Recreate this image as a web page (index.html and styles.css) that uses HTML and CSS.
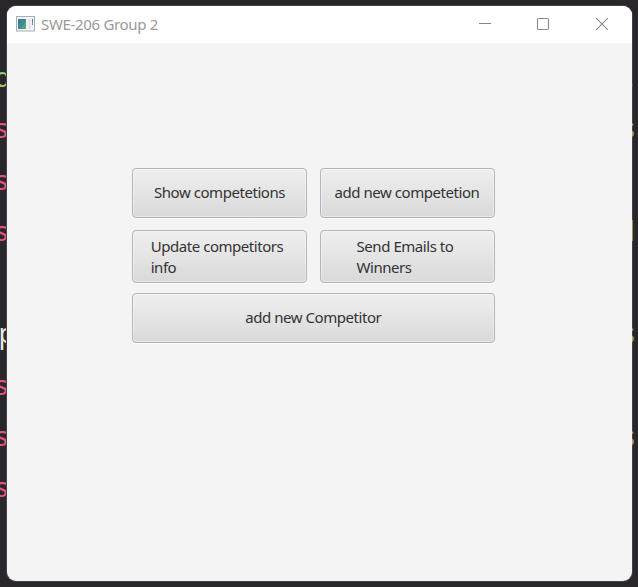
FILE: index.html
```html
<!DOCTYPE html>
<html lang="en">
<head>
<meta charset="utf-8">
<title>SWE-206 Group 2</title>
<link rel="stylesheet" href="styles.css">
</head>
<body>
<div class="code code-left">
  <span class="green">d</span><span>s</span><span>s</span><span>s</span><span></span><span class="white">p</span><span>s</span><span>s</span><span>s</span>
</div>
<main class="window">
  <header class="titlebar">
    <svg class="app-icon" width="19" height="16" viewBox="0 0 19 16">
      <rect x=".5" y=".5" width="18" height="14.5" fill="#f1f3f4" stroke="#aaaeb5"/>
      <rect x="2" y="3" width="8" height="10" fill="#438b91"/>
      <path d="M2 3h5l-5 6z" fill="#397aa0"/>
      <path d="M10 5v8H5z" fill="#56a383"/>
      <path d="M12 3h3v10h-3z" fill="#e4e6e8"/>
      <path d="M16.5 3v3" stroke="#3d83b0"/><path d="M16.5 6v3" stroke="#60aa80"/>
    </svg>
    <h1 class="title">SWE-206 Group 2</h1>
    <div class="controls">
      <svg width="14" height="14" viewBox="0 0 14 14"><path d="M1 6.5h12"/></svg>
      <svg width="14" height="14" viewBox="0 0 14 14"><rect x="1.5" y="1.5" width="11" height="11" rx="1.2"/></svg>
      <svg width="14" height="14" viewBox="0 0 14 14"><path d="M1.2 1.2l11.6 11.6M12.8 1.2L1.2 12.8"/></svg>
    </div>
  </header>
  <section class="actions">
    <button><span class="label raised">Show competetions</span></button>
    <button><span class="label raised">add new competetion</span></button>
    <button><span class="label update">Update competitors<br>info</span></button>
    <button><span class="label send">Send Emails to<br>Winners</span></button>
    <button class="wide"><span class="label raised">add new Competitor</span></button>
  </section>
</main>
<div class="code code-right">
  <span class="dim">.</span><span>s</span><span></span><span class="bar">l</span><span></span><span>s</span><span></span><span class="tan">s</span>
</div>
</body>
</html>
```
FILE: styles.css
```css
* { box-sizing: border-box; }
body {
  margin: 0;
  width: 638px;
  height: 587px;
  padding: 6px 0;
  overflow: hidden;
  display: grid;
  grid-template-columns: 7px 625px 6px;
  background: #29272b;
}
.window {
  height: 575px;
  border-radius: 9px;
  overflow: hidden;
  background: #f4f4f4;
  box-shadow: 0 0 0 1px #444345;
}
.titlebar {
  height: 37px;
  background: #fff;
  display: flex;
  align-items: center;
  padding: 0 23px 0 9px;
}
.app-icon { margin-top: -1px; }
.title {
  margin: 0 auto 0 6px;
  padding-bottom: 2px;
  font: 400 15px/20px "Noto Sans", sans-serif;
  letter-spacing: -.32px;
  color: #999;
  white-space: nowrap;
}
.controls { display: flex; gap: 44px; margin-top: -1px; }
.controls svg { fill: none; stroke: #888; stroke-width: 1.1; }
.controls svg:nth-child(2) { margin-right: 1px; }
.actions {
  margin: 125px 0 0 125px;
  display: grid;
  grid-template-columns: 175px 175px;
  grid-template-rows: 50px 53px 50px;
  column-gap: 12.5px;
  row-gap: 12px;
}
button {
  display: flex;
  align-items: center;
  justify-content: center;
  padding: 0;
  border: 1px solid #b5b5b5;
  border-radius: 4px;
  background: linear-gradient(#efefef, #d9d9d9);
  box-shadow: inset 0 0 0 1px #ffffff66, 0 1px 0 #fafafa;
  color: #333;
  font: 400 15px/21px "Noto Sans", sans-serif;
}
.wide { grid-column: 1 / 3; margin-top: -2px; height: 50px; }
.label {
  text-align: left;
  white-space: nowrap;
  letter-spacing: -.45px;
}
.raised { padding-bottom: 2px; }
.update { margin-right: 5px; }
.send { margin-right: 4px; }
.code {
  height: 575px;
  overflow: hidden;
  display: flex;
  flex-direction: column;
  padding-top: 45px;
  color: #e5527f;
  font: 27px/51.3px "Noto Sans", sans-serif;
}
.code span { height: 51.3px; flex: none; }
.code-left { align-items: flex-end; }
.code-left span { margin-right: -1px; }
.code-left .green { color: #96cc65; margin-right: -4px; }
.code-left .white { color: #e6e6df; margin-right: -8px; }
.code-right { color: #98ae51; }
.code-right span { margin-left: -10px; }
.code-right .dim { color: #b76543; margin-left: -5px; }
.code-right .bar { margin-left: -4px; }
.code-right .tan { color: #b99a79; }
```
